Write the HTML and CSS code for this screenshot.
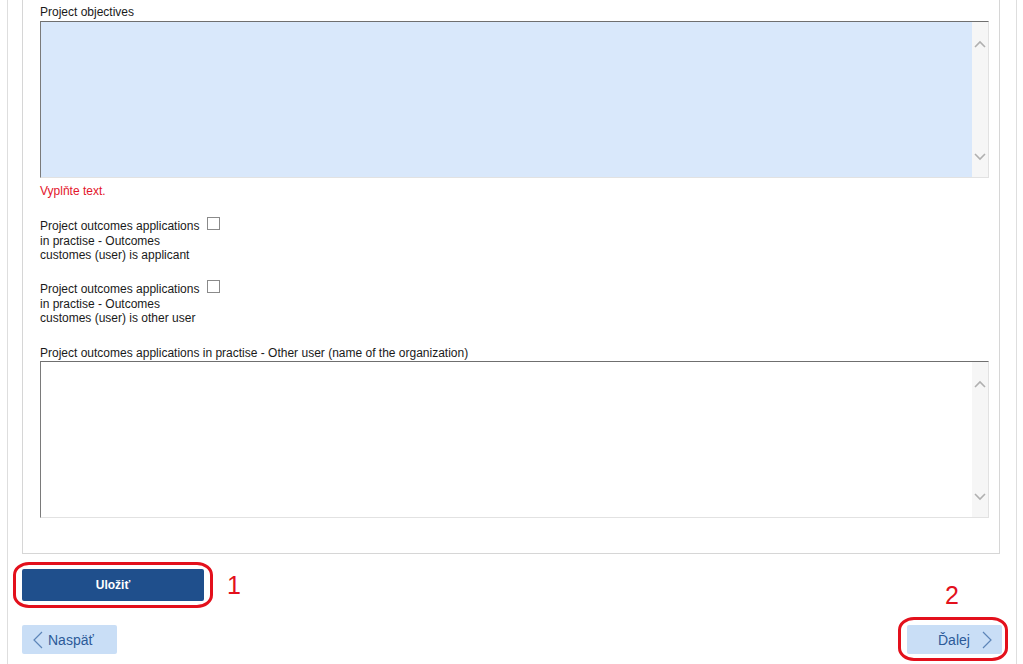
FILE: index.html
```html
<!DOCTYPE html>
<html lang="sk">
<head>
<meta charset="utf-8">
<title>Form</title>
<link rel="stylesheet" href="styles.css">
</head>
<body>
<div class="frame">
  <div class="panel">
    <div class="field">
      <div class="label">Project objectives</div>
      <div class="textbox invalid">
        <div class="textbox-content"></div>
        <div class="scrollbar">
          <svg class="chev" width="12" height="8" viewBox="0 0 12 8"><path d="M1 7 L6 2 L11 7" fill="none" stroke="#b0b0b0" stroke-width="1.6"/></svg>
          <svg class="chev" width="12" height="8" viewBox="0 0 12 8"><path d="M1 1 L6 6 L11 1" fill="none" stroke="#b0b0b0" stroke-width="1.6"/></svg>
        </div>
      </div>
      <div class="error">Vyplňte text.</div>
    </div>

    <div class="check-row first">
      <div class="check-label">Project outcomes applications in practise - Outcomes customes (user) is applicant</div>
      <span class="checkbox"></span>
    </div>

    <div class="check-row">
      <div class="check-label">Project outcomes applications in practise - Outcomes customes (user) is other user</div>
      <span class="checkbox"></span>
    </div>

    <div class="field second">
      <div class="label">Project outcomes applications in practise - Other user (name of the organization)</div>
      <div class="textbox">
        <div class="textbox-content"></div>
        <div class="scrollbar">
          <svg class="chev" width="12" height="8" viewBox="0 0 12 8"><path d="M1 7 L6 2 L11 7" fill="none" stroke="#b0b0b0" stroke-width="1.6"/></svg>
          <svg class="chev" width="12" height="8" viewBox="0 0 12 8"><path d="M1 1 L6 6 L11 1" fill="none" stroke="#b0b0b0" stroke-width="1.6"/></svg>
        </div>
      </div>
    </div>
  </div>

  <div class="save-row">
    <button class="btn-save" type="button">Uložiť</button>
    <span class="mark mark-save"></span>
    <span class="num num-1">1</span>
  </div>

  <div class="nav-row">
    <button class="btn-nav" type="button">
      <svg width="10" height="18" viewBox="0 0 10 18"><path d="M9 1 L1 9 L9 17" fill="none" stroke="#5d85b8" stroke-width="1.2"/></svg>
      <span>Naspäť</span>
    </button>
    <div class="next-wrap">
      <span class="num num-2">2</span>
      <button class="btn-nav btn-next" type="button">
        <span>Ďalej</span>
        <svg width="10" height="18" viewBox="0 0 10 18"><path d="M1 1 L9 9 L1 17" fill="none" stroke="#5d85b8" stroke-width="1.2"/></svg>
      </button>
      <span class="mark mark-next"></span>
    </div>
  </div>
</div>
</body>
</html>
```

FILE: styles.css
```css
html, body {
  margin: 0;
  padding: 0;
  background: #ffffff;
}

body {
  font-family: "Liberation Sans", Arial, sans-serif;
  font-size: 12px;
  color: #1a1a1a;
  overflow: hidden;
}

.frame {
  margin-left: 7px;
  width: 994px;
  min-height: 664px;
  border-left: 1px solid #dedede;
  border-right: 1px solid #dedede;
  padding-left: 14px;
  box-sizing: content-box;
}

.panel {
  width: 978px;
  border: 1px solid #d6d6d6;
  border-top: none;
  padding: 5px 12px 35px 17px;
  box-sizing: border-box;
}

.label {
  line-height: 15px;
  margin-bottom: 1px;
}

.field.second .label {
  margin-bottom: 0;
}

.textbox {
  display: flex;
  width: 949px;
  height: 157px;
  box-sizing: border-box;
  border-top: 1px solid #6f6f6f;
  border-left: 1px solid #7a7a7a;
  border-right: 1px solid #e2e2e2;
  border-bottom: 1px solid #e2e2e2;
  background: #ffffff;
}

.textbox.invalid .textbox-content {
  background: #d9e8fb;
}

.textbox-content {
  flex: 1;
}

.scrollbar {
  width: 16px;
  background: #f6f6f6;
  display: flex;
  flex-direction: column;
  justify-content: space-between;
  align-items: center;
  padding: 18px 0 16px;
}

.chev {
  display: block;
}

.error {
  color: #e3152b;
  line-height: 14px;
  margin-top: 6px;
}

.check-row {
  display: flex;
  align-items: flex-start;
  margin-top: 19.5px;
}

.check-row.first {
  margin-top: 21px;
}

.check-label {
  width: 167px;
  line-height: 14.5px;
}

.checkbox {
  width: 11px;
  height: 11px;
  border: 1px solid #8a8a8a;
  background: #fff;
  margin-top: -2px;
  flex: none;
}

.field.second {
  margin-top: 20.5px;
}

.save-row {
  position: relative;
  margin-top: 15px;
  height: 32px;
}

.btn-save {
  width: 182px;
  height: 32px;
  border: none;
  border-radius: 2px;
  background: #1f4f8c;
  color: #ffffff;
  font-family: "Liberation Sans", Arial, sans-serif;
  font-size: 12px;
  font-weight: bold;
  padding: 0;
  display: block;
}

.mark {
  position: absolute;
  border: 3px solid #e3101c;
  border-radius: 16px / 13px;
  box-sizing: border-box;
  pointer-events: none;
}

.mark-save {
  left: -9px;
  top: -7px;
  width: 200px;
  height: 46px;
}

.num {
  position: absolute;
  color: #e3101c;
  font-family: "Liberation Sans", Arial, sans-serif;
  font-size: 25px;
  line-height: 25px;
}

.num-1 {
  left: 205px;
  top: 4px;
}

.nav-row {
  margin-top: 24px;
  width: 980px;
  display: flex;
  justify-content: space-between;
  align-items: flex-start;
}

.btn-nav {
  height: 29px;
  width: 95px;
  border: none;
  border-radius: 2px;
  background: #c9def6;
  color: #2c5a99;
  font-family: "Liberation Sans", Arial, sans-serif;
  font-size: 14px;
  display: flex;
  align-items: center;
  gap: 5px;
  padding: 0 0 0 11px;
}

.next-wrap {
  position: relative;
}

.btn-next {
  padding: 0 0 0 31px;
  gap: 12px;
}

.mark-next {
  left: -9px;
  top: -8px;
  width: 110px;
  height: 44px;
}

.num-2 {
  left: 38px;
  top: -42px;
}
```
